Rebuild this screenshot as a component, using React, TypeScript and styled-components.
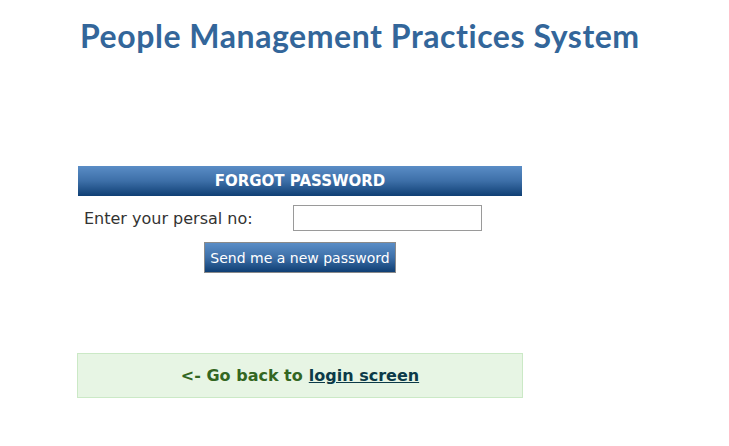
import React, { useState } from 'react';
import styled, { createGlobalStyle } from 'styled-components';

const GlobalStyle = createGlobalStyle`
	html, body {
		margin: 0;
		padding: 0;
		background: #ffffff;
	}
	body {
		font-family: "DejaVu Sans", Verdana, sans-serif;
	}
`;

const Page = styled.div`
	display: flex;
	flex-direction: column;
	padding-top: 17px;
`;

const Title = styled.h1`
	margin: 0 0 0 80px;
	font-family: "Lato", "DejaVu Sans", sans-serif;
	font-size: 32px;
	font-weight: 700;
	line-height: 38px;
	letter-spacing: 0.55px;
	color: #33669a;
	white-space: nowrap;
`;

const Panel = styled.div`
	width: 444px;
	margin: 111px 0 0 78px;
	display: flex;
	flex-direction: column;
`;

const PanelHeader = styled.div`
	height: 30px;
	display: flex;
	align-items: center;
	justify-content: center;
	background: linear-gradient(to bottom, #5a8dc6 0%, #3d6fa8 50%, #0f3f74 100%);
	color: #ffffff;
	font-size: 15px;
	font-weight: 700;
`;

const FormRow = styled.div`
	display: flex;
	align-items: center;
	padding: 9px 0 0 6px;
`;

const Label = styled.label`
	width: 209px;
	font-size: 16px;
	color: #333333;
`;

const Input = styled.input`
	box-sizing: border-box;
	width: 189px;
	height: 26px;
	margin: 0;
	border: 1px solid #9a9a9a;
	background: #ffffff;
	padding: 2px 4px;
	font-size: 14px;
	font-family: inherit;
	outline: none;
`;

const Actions = styled.div`
	display: flex;
	justify-content: center;
	padding-top: 11px;
`;

const SubmitButton = styled.button`
	box-sizing: border-box;
	width: 192px;
	height: 31px;
	padding: 0;
	border: 1px solid #8a8a8a;
	background: linear-gradient(to bottom, #5a8dc6 0%, #3d6fa8 50%, #0f3f74 100%);
	color: #ffffff;
	font-family: "DejaVu Sans", Tahoma, sans-serif;
	font-size: 14px;
	cursor: pointer;
`;

const BackBox = styled.div`
	box-sizing: border-box;
	width: 446px;
	height: 45px;
	margin: 80px 0 0 -1px;
	display: flex;
	align-items: center;
	justify-content: center;
	background: #e7f5e4;
	border: 1px solid #cbe9c6;
	font-size: 16px;
	font-weight: 700;
	color: #336622;
`;

const BackLink = styled.a`
	margin-left: 6px;
	color: #0c3a48;
	text-decoration: underline;
	cursor: pointer;
`;

const App: React.FC = () => {
	const [persal, setPersal] = useState('');

	return (
		<>
			<GlobalStyle />
			<Page>
				<Title>People Management Practices System</Title>
				<Panel>
					<PanelHeader>FORGOT PASSWORD</PanelHeader>
					<FormRow>
						<Label htmlFor="persal">Enter your persal no:</Label>
						<Input
							id="persal"
							type="text"
							value={persal}
							onChange={(e) => setPersal(e.target.value)}
						/>
					</FormRow>
					<Actions>
						<SubmitButton type="button">Send me a new password</SubmitButton>
					</Actions>
					<BackBox>
						&lt;- Go back to<BackLink href="#">login screen</BackLink>
					</BackBox>
				</Panel>
			</Page>
		</>
	);
};

export default App;
